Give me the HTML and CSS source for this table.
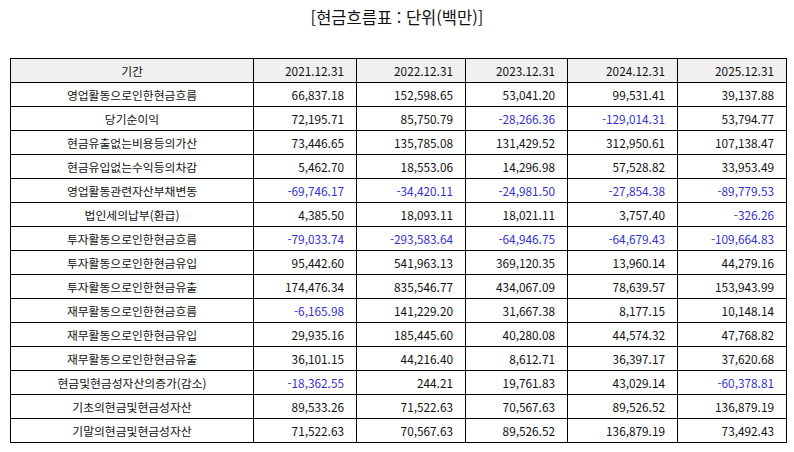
FILE: index.html
```html
<!DOCTYPE html>
<html lang="ko">
<head>
<meta charset="utf-8">
<title>현금흐름표</title>
<link rel="stylesheet" href="styles.css">
</head>
<body>
<div class="page">
  <h1 class="title">[현금흐름표 : 단위(백만)]</h1>
  <table class="cf">
    <colgroup>
      <col class="c-label"><col class="c1"><col class="c2"><col class="c3"><col class="c4"><col class="c5">
    </colgroup>
    <thead>
      <tr><th class="lbl">기간</th><th>2021.12.31</th><th>2022.12.31</th><th>2023.12.31</th><th>2024.12.31</th><th>2025.12.31</th></tr>
    </thead>
    <tbody>
      <tr><td class="lbl">영업활동으로인한현금흐름</td><td>66,837.18</td><td>152,598.65</td><td>53,041.20</td><td>99,531.41</td><td>39,137.88</td></tr>
      <tr><td class="lbl">당기순이익</td><td>72,195.71</td><td>85,750.79</td><td class="neg">-28,266.36</td><td class="neg">-129,014.31</td><td>53,794.77</td></tr>
      <tr><td class="lbl">현금유출없는비용등의가산</td><td>73,446.65</td><td>135,785.08</td><td>131,429.52</td><td>312,950.61</td><td>107,138.47</td></tr>
      <tr><td class="lbl">현금유입없는수익등의차감</td><td>5,462.70</td><td>18,553.06</td><td>14,296.98</td><td>57,528.82</td><td>33,953.49</td></tr>
      <tr><td class="lbl">영업활동관련자산부채변동</td><td class="neg">-69,746.17</td><td class="neg">-34,420.11</td><td class="neg">-24,981.50</td><td class="neg">-27,854.38</td><td class="neg">-89,779.53</td></tr>
      <tr><td class="lbl">법인세의납부(환급)</td><td>4,385.50</td><td>18,093.11</td><td>18,021.11</td><td>3,757.40</td><td class="neg">-326.26</td></tr>
      <tr><td class="lbl">투자활동으로인한현금흐름</td><td class="neg">-79,033.74</td><td class="neg">-293,583.64</td><td class="neg">-64,946.75</td><td class="neg">-64,679.43</td><td class="neg">-109,664.83</td></tr>
      <tr><td class="lbl">투자활동으로인한현금유입</td><td>95,442.60</td><td>541,963.13</td><td>369,120.35</td><td>13,960.14</td><td>44,279.16</td></tr>
      <tr><td class="lbl">투자활동으로인한현금유출</td><td>174,476.34</td><td>835,546.77</td><td>434,067.09</td><td>78,639.57</td><td>153,943.99</td></tr>
      <tr><td class="lbl">재무활동으로인한현금흐름</td><td class="neg">-6,165.98</td><td>141,229.20</td><td>31,667.38</td><td>8,177.15</td><td>10,148.14</td></tr>
      <tr><td class="lbl">재무활동으로인한현금유입</td><td>29,935.16</td><td>185,445.60</td><td>40,280.08</td><td>44,574.32</td><td>47,768.82</td></tr>
      <tr><td class="lbl">재무활동으로인한현금유출</td><td>36,101.15</td><td>44,216.40</td><td>8,612.71</td><td>36,397.17</td><td>37,620.68</td></tr>
      <tr><td class="lbl">현금및현금성자산의증가(감소)</td><td class="neg">-18,362.55</td><td>244.21</td><td>19,761.83</td><td>43,029.14</td><td class="neg">-60,378.81</td></tr>
      <tr><td class="lbl">기초의현금및현금성자산</td><td>89,533.26</td><td>71,522.63</td><td>70,567.63</td><td>89,526.52</td><td>136,879.19</td></tr>
      <tr><td class="lbl">기말의현금및현금성자산</td><td>71,522.63</td><td>70,567.63</td><td>89,526.52</td><td>136,879.19</td><td>73,492.43</td></tr>
    </tbody>
  </table>
</div>
</body>
</html>
```
FILE: styles.css
```css
html, body {
  margin: 0;
  padding: 0;
  background: #ffffff;
}
body {
  font-family: "Noto Sans CJK KR", "Noto Sans", sans-serif;
  color: #111111;
}
.page {
  width: 794px;
  height: 452px;
  padding: 6px 0 0 10px;
  box-sizing: border-box;
}
.title {
  margin: 0 0 0 -10px;
  width: 794px;
  text-align: center;
  font-size: 16.5px;
  font-weight: normal;
  line-height: 22px;
  height: 52px;
}
.cf {
  border-collapse: collapse;
  table-layout: fixed;
  width: 776px;
  font-size: 11.8px;
}
.c-label { width: 243px; }
.c1 { width: 103px; }
.c2 { width: 109px; }
.c3 { width: 102px; }
.c4 { width: 110px; }
.c5 { width: 109px; }
.cf th, .cf td {
  border: 1px solid #000000;
  height: 23px;
  padding: 0 12px 0 4px;
  text-align: right;
  font-weight: normal;
  white-space: nowrap;
  line-height: 14px;
}
.cf th {
  background: #f0f0f0;
}
.cf .lbl {
  text-align: center;
  padding: 0 4px;
}
.cf .neg {
  color: #3333cc;
}
```
